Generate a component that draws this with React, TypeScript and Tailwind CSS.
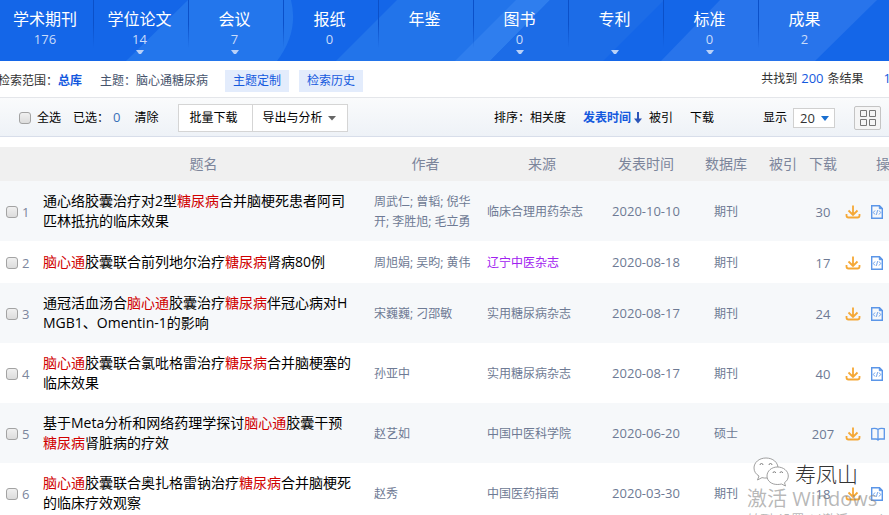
import { useState } from 'react'

interface Category {
  name: string
  count?: number
  more?: boolean
}

interface Result {
  id: number
  title: string
  authors: string
  source: string
  visited?: boolean
  date: string
  db: string
  downloads: number
}

const categories: Category[] = [
  { name: '学术期刊', count: 176 },
  { name: '学位论文', count: 14, more: true },
  { name: '会议', count: 7, more: true },
  { name: '报纸', count: 0 },
  { name: '年鉴' },
  { name: '图书', count: 0, more: true },
  { name: '专利', more: true },
  { name: '标准', count: 0, more: true },
  { name: '成果', count: 2 },
]

const results: Result[] = [
  {
    id: 1,
    title: '通心络胶囊治疗对2型糖尿病合并脑梗死患者阿司匹林抵抗的临床效果',
    authors: '周武仁; 曾韬; 倪华开; 李胜旭; 毛立勇',
    source: '临床合理用药杂志',
    date: '2020-10-10',
    db: '期刊',
    downloads: 30,
  },
  {
    id: 2,
    title: '脑心通胶囊联合前列地尔治疗糖尿病肾病80例',
    authors: '周旭娟; 吴昀; 黄伟',
    source: '辽宁中医杂志',
    visited: true,
    date: '2020-08-18',
    db: '期刊',
    downloads: 17,
  },
  {
    id: 3,
    title: '通冠活血汤合脑心通胶囊治疗糖尿病伴冠心病对HMGB1、Omentin-1的影响',
    authors: '宋巍巍; 刁邵敏',
    source: '实用糖尿病杂志',
    date: '2020-08-17',
    db: '期刊',
    downloads: 24,
  },
  {
    id: 4,
    title: '脑心通胶囊联合氯吡格雷治疗糖尿病合并脑梗塞的临床效果',
    authors: '孙亚中',
    source: '实用糖尿病杂志',
    date: '2020-08-17',
    db: '期刊',
    downloads: 40,
  },
  {
    id: 5,
    title: '基于Meta分析和网络药理学探讨脑心通胶囊干预糖尿病肾脏病的疗效',
    authors: '赵艺如',
    source: '中国中医科学院',
    date: '2020-06-20',
    db: '硕士',
    downloads: 207,
  },
  {
    id: 6,
    title: '脑心通胶囊联合奥扎格雷钠治疗糖尿病合并脑梗死的临床疗效观察',
    authors: '赵秀',
    source: '中国医药指南',
    date: '2020-03-30',
    db: '期刊',
    downloads: 18,
  },
]

const checkboxClass =
  'block h-3 w-3 shrink-0 appearance-none rounded-[3px] border border-[#a3a3a3] bg-linear-to-b from-[#f0f0f0] to-[#dcdcdc] checked:bg-[#1a6be8]'

export default function App() {
  const [selected, setSelected] = useState<number[]>([])

  const toggle = (id: number) => {
    setSelected((prev) => (prev.includes(id) ? prev.filter((x) => x !== id) : [...prev, id]))
  }

  const toggleAll = () => {
    setSelected(selected.length === results.length ? [] : results.map((r) => r.id))
  }

  return (
    <div className="relative h-screen overflow-hidden bg-white font-['Open_Sans','Noto_Sans_CJK_SC',sans-serif] text-xs text-[#333]">
      <CategoryNav />
      <SearchSummary />
      <Toolbar count={selected.length} onToggleAll={toggleAll} onClear={() => setSelected([])} />
      <ResultTable selected={selected} onToggle={toggle} />
      <Watermark />
    </div>
  )
}

function CategoryNav() {
  return (
    <nav className="relative h-[61px] bg-[#1466e8]">
      <svg className="absolute inset-0 h-full w-full" viewBox="0 0 889 61" preserveAspectRatio="none" aria-hidden="true">
        <path d="M188 0H291Q299 32 277 61H126Z" fill="#2376ec" />
        <path d="M397 0H550L490 61H336Z" fill="#2274ea" />
        <path d="M516 0H550L490 61H455Z" fill="#2f7eee" />
        <path d="M550 0H664L603 61H490Z" fill="#1c6ce7" />
        <path d="M720 0H877L815 61H661Z" fill="#2874eb" />
      </svg>
      <ul className="relative grid h-full grid-cols-[94fr_repeat(8,95fr)_35fr]">
        {categories.map((c) => (
          <li key={c.name} className="group relative">
            <a href="#" className="flex h-full flex-col items-center pr-1 pt-[7px] text-white">
              <span className="text-base leading-6">{c.name}</span>
              <span className="h-4 text-[13px] leading-4 text-[#c9dcfa]">{c.count}</span>
              {c.more && (
                <svg className="mt-[3px] h-1 w-2" viewBox="0 0 8 4" aria-hidden="true">
                  <path d="M0 0H8L5 4H3Z" fill="#b9d1f8" />
                </svg>
              )}
            </a>
            <span className="absolute right-0 top-0 h-12 w-px bg-linear-to-b from-[#0b50c9] via-[#0b50c9] to-transparent group-last:hidden" />
          </li>
        ))}
      </ul>
    </nav>
  )
}

function SearchSummary() {
  return (
    <div className="flex h-[37px] items-center justify-between overflow-hidden whitespace-nowrap border-b border-[#e4e6ea]">
      <div className="-ml-0.5 flex items-center pt-1">
        <span>检索范围：</span>
        <a href="#" className="font-bold text-[#1459de]">总库</a>
        <span className="ml-[18px] text-[#45526b]">主题：脑心通糖尿病</span>
        <button className="ml-[17px] h-[22px] bg-[#e3ecfc] px-2 text-[#1459de]">主题定制</button>
        <button className="ml-2.5 h-[22px] bg-[#e3ecfc] px-2 text-[#1459de]">检索历史</button>
      </div>
      <p className="flex items-center">
        共找到<span className="mx-1 text-[13px] text-[#1459de]">200</span>条结果
        <span className="-mr-0.5 ml-5 text-[13px] text-[#1459de]">1</span>
      </p>
    </div>
  )
}

function Toolbar({
  count,
  onToggleAll,
  onClear,
}: {
  count: number
  onToggleAll: () => void
  onClear: () => void
}) {
  return (
    <div className="flex h-[39px] items-center justify-between whitespace-nowrap border-b border-[#d8deea] bg-linear-to-b from-[#fafbfc] to-[#eef2f7] pl-[19px] pr-2 pt-0.5 text-black">
      <div className="flex items-center">
        <label className="flex items-center gap-1.5">
          <input type="checkbox" className={checkboxClass} onChange={onToggleAll} />
          全选
        </label>
        <span className="ml-3">已选：</span>
        <span className="ml-1 text-[13px] text-[#3a70b8]">{count}</span>
        <button className="ml-3.5" onClick={onClear}>清除</button>
        <div className="ml-5 flex h-7">
          <button className="border border-[#d5d5d5] bg-white pl-2.5 pr-3.5">批量下载</button>
          <button className="flex items-center gap-1 border border-l-0 border-[#d5d5d5] bg-white px-2.5">
            导出与分析
            <svg className="h-1.5 w-2.5" viewBox="0 0 10 6" aria-hidden="true">
              <path d="M1 1H9L5 5.5Z" fill="#666" />
            </svg>
          </button>
        </div>
      </div>

      <div className="flex items-center">
        <span>排序：</span>
        <button>相关度</button>
        <button className="ml-[17px] flex items-center gap-0.5 font-bold text-[#1459de]">
          发表时间
          <svg className="h-3 w-2.5" viewBox="0 0 10 12" aria-hidden="true">
            <path d="M4 0H6V6.5H9L5 11.5L1 6.5H4Z" fill="#2c55b8" />
          </svg>
        </button>
        <button className="ml-1.5">被引</button>
        <button className="ml-[17px]">下载</button>
        <label htmlFor="page-size" className="ml-[49px]">显示</label>
        <div className="relative ml-1.5">
          <select
            id="page-size"
            defaultValue="20"
            className="block h-5 w-[42px] appearance-none border border-[#d0d0d0] bg-white pl-1.5 text-[13px] leading-4 text-[#333]"
          >
            <option>10</option>
            <option>20</option>
            <option>50</option>
          </select>
          <svg className="pointer-events-none absolute right-1.5 top-2 h-[5px] w-2" viewBox="0 0 8 5" aria-hidden="true">
            <path d="M0 0H8L4 5Z" fill="#1a6fd0" />
          </svg>
        </div>
        <button aria-label="详情" className="ml-[19px] flex h-6 w-[27px] items-center justify-center rounded-[2px] border border-[#c4c4c4] bg-[#f5f5f5]">
          <svg className="h-4 w-4" viewBox="0 0 16 16" fill="none" stroke="#777" aria-hidden="true">
            <path d="M.5 .5H6.500V6.500H.5ZM9.500 .5H15.500V6.500H9.500ZM.5 9.500H6.500V15.500H.5ZM9.500 9.500H15.500V15.500H9.500Z" />
          </svg>
        </button>
      </div>
    </div>
  )
}

function ResultTable({
  selected,
  onToggle,
}: {
  selected: number[]
  onToggle: (id: number) => void
}) {
  return (
    <div className="mt-2.5 overflow-hidden">
      <table className="w-full min-w-[943px] table-fixed text-[#6e7a94]">
        <colgroup>
          <col className="w-[43px]" />
          <col />
          <col className="w-[123px]" />
          <col className="w-[110px]" />
          <col className="w-[98px]" />
          <col className="w-[62px]" />
          <col className="w-[52px]" />
          <col className="w-[28px]" />
          <col className="w-[106px]" />
        </colgroup>
        <thead>
          <tr className="h-[34px] whitespace-nowrap bg-[#f0f0f0] text-sm text-[#7c859b] *:font-normal">
            <th></th>
            <th>题名</th>
            <th>作者</th>
            <th>来源</th>
            <th>发表时间</th>
            <th>数据库</th>
            <th>被引</th>
            <th>下载</th>
            <th>操作</th>
          </tr>
        </thead>
        <tbody>
          {results.map((r) => (
            <tr key={r.id} className="h-[42px] leading-5 odd:bg-[#f6f8fa]">
              <td className="pl-1.5 pt-0.5">
                <label className="flex items-center gap-1 text-[13px] text-[#7c869d]">
                  <input
                    type="checkbox"
                    className={checkboxClass}
                    checked={selected.includes(r.id)}
                    onChange={() => onToggle(r.id)}
                  />
                  {r.id}
                </label>
              </td>
              <td className="break-all py-2.5 pr-[11px] text-sm leading-5 text-black">
                <a href="#" className="block">
                  <Highlighted text={r.title} />
                </a>
              </td>
              <td className="px-2.5 pt-0.5">{r.authors}</td>
              <td className="pt-0.5">
                <a href="#" className={r.visited ? 'text-[#a020f0]' : ''}>{r.source}</a>
              </td>
              <td className="text-center text-[13px]">{r.date}</td>
              <td className="pt-0.5 text-center">{r.db}</td>
              <td></td>
              <td className="pt-0.5 text-center text-[13px]">{r.downloads}</td>
              <td className="pl-2 pt-0.5">
                <div className="flex items-center gap-2.5">
                  <button aria-label="下载">
                    <DownloadIcon />
                  </button>
                  <button aria-label="阅读">{r.db === '硕士' ? <BookIcon /> : <HtmlIcon />}</button>
                </div>
              </td>
            </tr>
          ))}
        </tbody>
      </table>
    </div>
  )
}

// search terms inside a title are shown in red
function Highlighted({ text }: { text: string }) {
  return (
    <>
      {text.split(/(脑心通|糖尿病)/).map((part, i) =>
        i % 2 === 1 ? (
          <span key={i} className="text-[#d00000]">{part}</span>
        ) : (
          part
        )
      )}
    </>
  )
}

function DownloadIcon() {
  return (
    <svg className="block h-3.5 w-4" viewBox="0 0 16 14" fill="none" stroke="#f5a836" strokeWidth="1.8" aria-hidden="true">
      <path d="M8 .5V10M3.500 5.500L8 10L12.500 5.500M1.500 9V10.500Q1.500 12.500 3.500 12.500H12.500Q14.500 12.500 14.500 10.500V9" />
    </svg>
  )
}

function HtmlIcon() {
  return (
    <svg className="block h-3.5 w-3" viewBox="0 0 12 14" fill="none" stroke="#5b96e8" aria-hidden="true">
      <path d="M.7 .7H8.500L11.300 3.500V13.300H.7Z" strokeWidth="1.4" />
      <path d="M8.300 .7V3.700H11.300Z" fill="#5b96e8" />
      <path d="M4 5.500L2.300 7.500L4 9.500M8 5.500L9.700 7.500L8 9.500M6.600 5.200L5.400 9.800" strokeWidth=".9" />
    </svg>
  )
}

function BookIcon() {
  return (
    <svg className="block h-3.5 w-3.5" viewBox="0 0 14 14" fill="none" stroke="#5b96e8" strokeWidth="1.3" aria-hidden="true">
      <path d="M7 2.500Q5 .8 .7 1.700V12H5Q6.500 12 7 13Q7.500 12 9 12H13.300V1.700Q9 .8 7 2.500ZM7 2.500V12.500" />
    </svg>
  )
}

function Watermark() {
  return (
    <div className="pointer-events-none absolute -bottom-3 right-0 w-[142px] whitespace-nowrap text-[#888]/60">
      <div className="flex items-center gap-1.5 pl-1.5">
        <svg className="mb-1 h-[30px] w-9" viewBox="0 0 36 30" fill="#fff" stroke="#888" strokeWidth=".8" aria-hidden="true">
          <path d="M13 1C6 1 1 5.500 1 11C1 14.500 3 17.300 6 19L4.500 23L9 20.600C10.500 21 12 21.200 14 21C20 20.500 25 16.500 25 11C25 5.500 20 1 13 1Z" />
          <path d="M24.500 10C18.500 10 14 14 14 19C14 24 18.500 27.500 24.500 27.500C26 27.500 27.300 27.300 28.500 27L32.500 29L31.500 25.700C34 24 35.300 21.700 35.300 19C35.300 14 30.500 10 24.500 10Z" />
          <path d="M7 8A1.500 1.500 0 0 1 10 8M16 8A1.500 1.500 0 0 1 19 8M20 16A1.300 1.300 0 0 1 22.600 16M27 16A1.300 1.300 0 0 1 29.600 16" fill="none" stroke="#666" />
        </svg>
        <span className="text-[21px] font-light leading-8 text-[#333] text-shadow-[0_0_2px_#fff]">寿凤山</span>
      </div>
      <p className="-mt-1 text-xl leading-6">激活 Windows</p>
      <p className="text-[13px] leading-4">转到"设置"以激活 Windows。</p>
    </div>
  )
}
